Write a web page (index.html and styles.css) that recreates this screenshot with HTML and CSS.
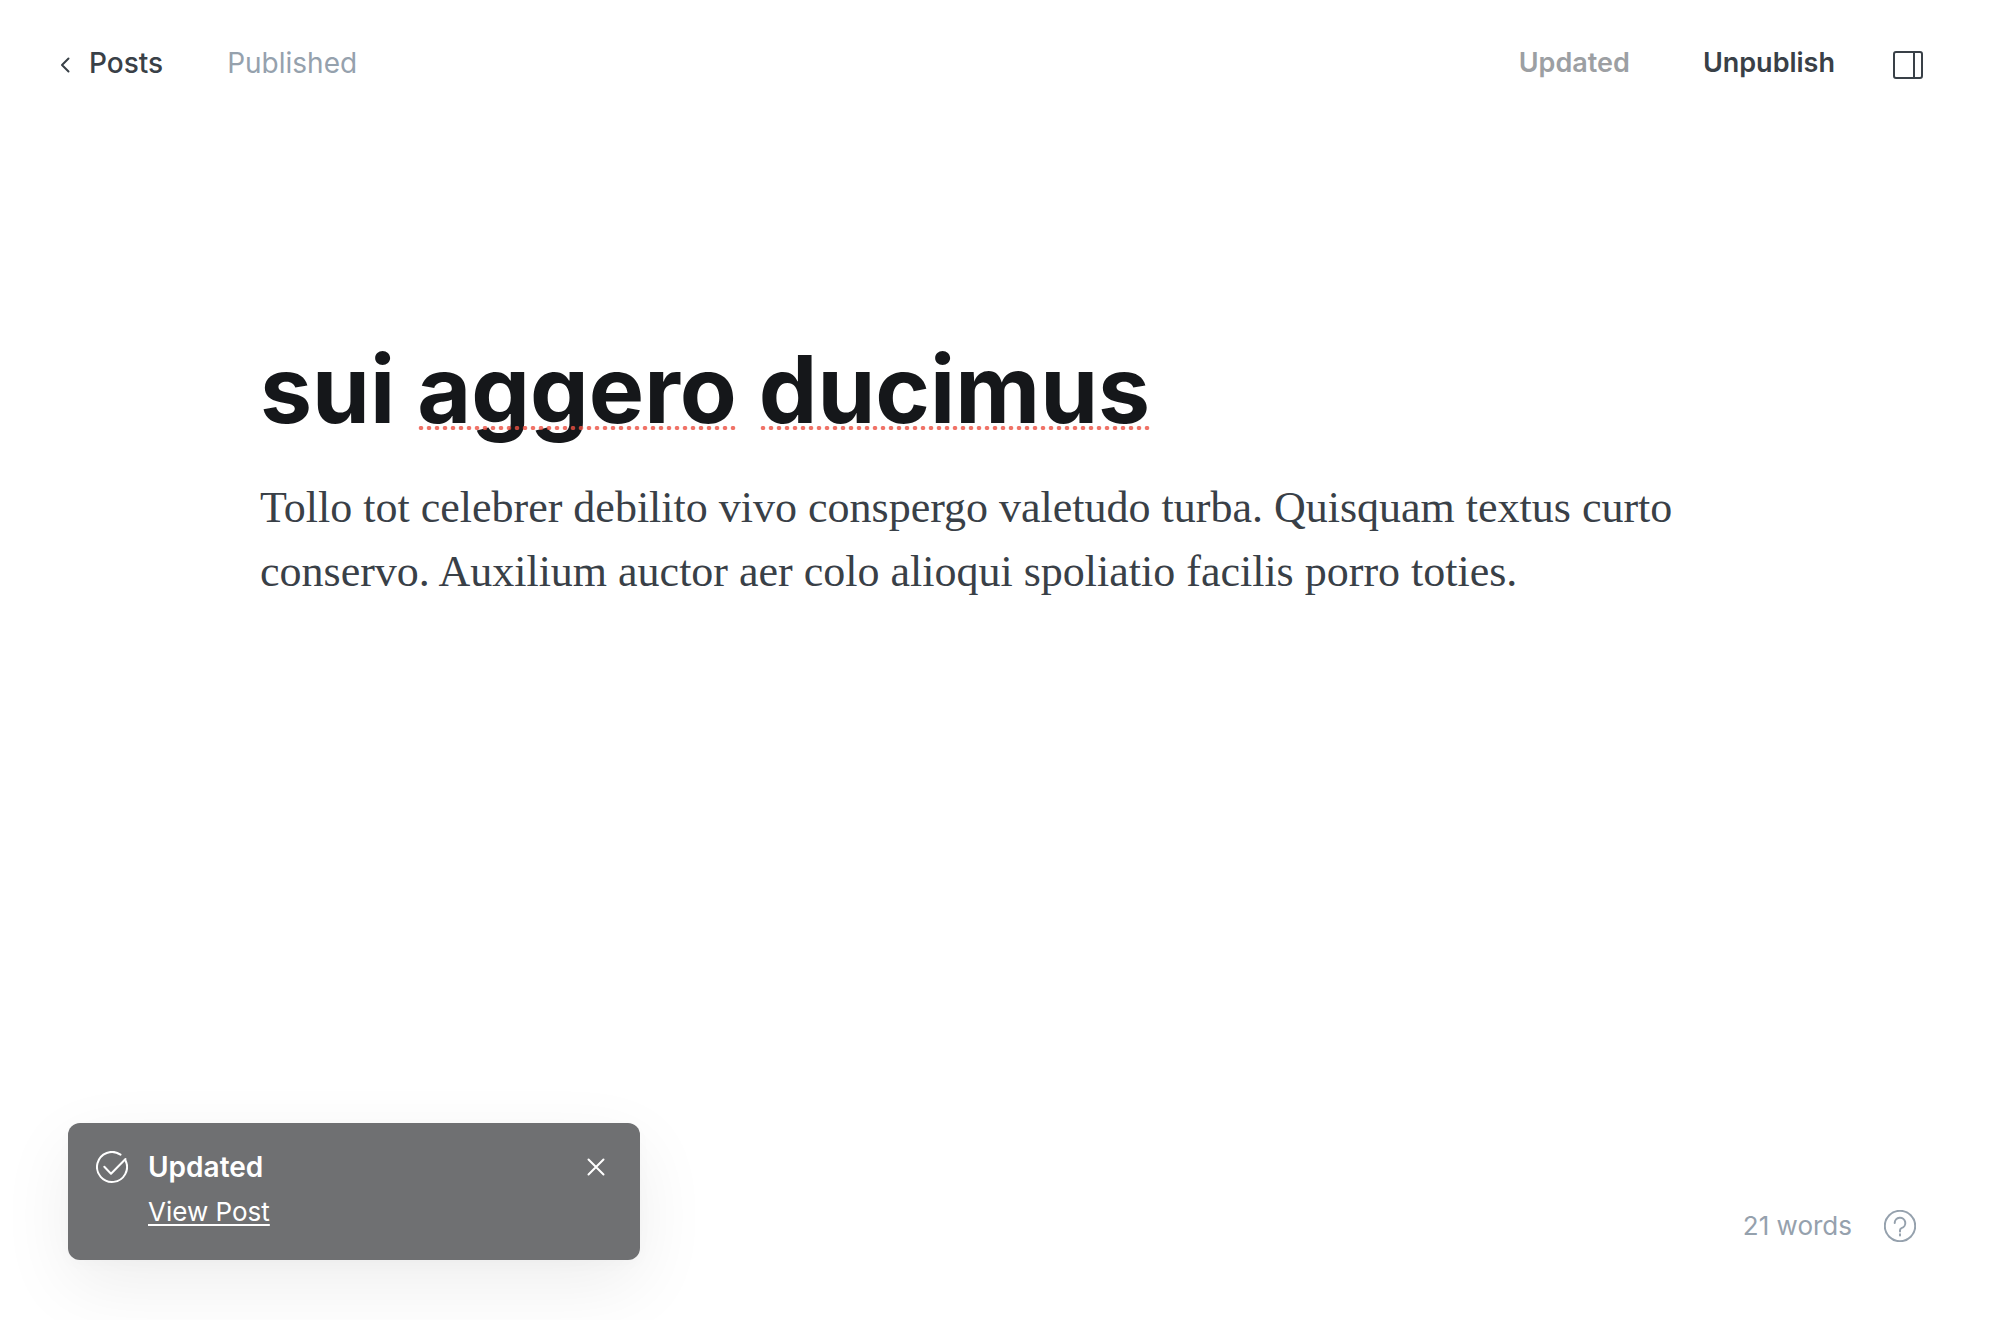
FILE: index.html
```html
<!DOCTYPE html>
<html lang="en">
<head>
<meta charset="utf-8">
<meta name="viewport" content="width=device-width, initial-scale=1">
<title>sui aggero ducimus</title>
<link rel="stylesheet" href="styles.css">
</head>
<body>
<div class="editor">
  <header class="editor-header">
    <div class="header-group header-left">
      <a class="back-link" href="#posts">
        <svg class="icon-back" viewBox="0 0 12 18" aria-hidden="true"><path d="M8.500 2.500L2 9L8.500 15.500"/></svg>
        <span>Posts</span>
      </a>
      <span class="post-status">Published</span>
    </div>
    <div class="header-group header-right">
      <button class="header-button is-done" type="button">Updated</button>
      <button class="header-button" type="button">Unpublish</button>
      <button class="icon-button" type="button" aria-label="Settings">
        <svg class="icon-sidebar" viewBox="0 0 32 32" aria-hidden="true"><rect x="2" y="3" width="28" height="26" rx="2"/><path d="M22 3V29"/></svg>
      </button>
    </div>
  </header>

  <main class="post">
    <h1 class="post-title">sui <span class="misspelled">aggero</span> <span class="misspelled">ducimus</span></h1>
    <p class="post-body">Tollo tot celebrer debilito vivo conspergo valetudo turba. Quisquam textus curto conservo. Auxilium auctor aer colo alioqui spoliatio facilis porro toties.</p>
  </main>

  <footer class="editor-footer">
    <div class="toast" role="status">
      <svg class="icon-check" viewBox="0 0 32 32" aria-hidden="true"><path d="M24.500 3.600A15 15 0 1 0 29.400 9.200"/><path d="M29.500 8L15 22.700L8.300 15.800"/></svg>
      <div class="toast-content">
        <strong class="toast-title">Updated</strong>
        <a class="toast-link" href="#view">View Post</a>
      </div>
      <button class="toast-close" type="button" aria-label="Close">
        <svg class="icon-close" viewBox="0 0 18 18" aria-hidden="true"><path d="M1.500 1.500L16.500 16.500M16.500 1.500L1.500 16.500"/></svg>
      </button>
    </div>
    <div class="footer-tools">
      <span class="word-count">21 words</span>
      <a class="help-link" href="#help" aria-label="Help">
        <svg class="icon-help" viewBox="0 0 32 32" aria-hidden="true"><circle cx="16" cy="16" r="15.200"/><path d="M10.700 13A5.300 5.300 0 1 1 17.500 18.100Q16 18.700 16 20.200V21.500"/><path d="M16 24.200V25.400"/></svg>
      </a>
    </div>
  </footer>
</div>
</body>
</html>
```
FILE: styles.css
```css
* {
  box-sizing: border-box;
}

body {
  margin: 0;
  background: #fff;
  color: #394047;
  font-family: Inter, "Liberation Sans", sans-serif;
  font-size: 28px;
  line-height: 36px;
}

button {
  padding: 0;
  border: 0;
  background: none;
  color: inherit;
  font: inherit;
  cursor: pointer;
}

a {
  color: inherit;
}

svg {
  display: block;
  fill: none;
  stroke: currentColor;
  stroke-width: 2;
  stroke-linecap: round;
  stroke-linejoin: round;
}

.editor {
  display: flex;
  flex-direction: column;
  min-height: 100vh;
}

.editor-header {
  display: flex;
  align-items: center;
  justify-content: space-between;
  padding: 45px 76px 47px 60px;
}

.header-group {
  display: flex;
  align-items: center;
}

.header-left {
  gap: 64px;
}

.header-right {
  gap: 73px;
}

.back-link {
  display: flex;
  align-items: center;
  gap: 17px;
  font-weight: 500;
  text-decoration: none;
}

.icon-back {
  width: 12px;
  height: 18px;
  margin-top: 4px;
}

.post-status {
  color: #95a1ad;
}

.header-button {
  font-size: 27px;
  font-weight: 600;
}

.header-button.is-done {
  color: #9c9fa3;
}

.icon-button {
  margin: 4px 0 0 -16px;
}

.icon-sidebar {
  width: 32px;
  height: 32px;
}

.post {
  flex: 1;
  width: 100%;
  max-width: 1480px;
  margin: 0 auto;
  padding-top: 201px;
}

.post-title {
  margin: 0;
  color: #15171a;
  font-size: 93px;
  font-weight: 700;
  line-height: 120px;
}

.misspelled {
  position: relative;
}

.misspelled::after {
  content: "";
  position: absolute;
  right: 0;
  bottom: 15px;
  left: 0;
  height: 4px;
  background: radial-gradient(circle, rgba(236, 80, 66, 0.8) 0 40%, transparent 60%) 0 0 / 8px 4px;
}

.post-body {
  margin: 27px 0 0;
  font-family: Georgia, "Liberation Serif", serif;
  font-size: 44px;
  line-height: 64px;
}

.editor-footer {
  display: flex;
  align-items: flex-end;
  justify-content: space-between;
  padding: 0 84px 60px 68px;
}

.toast {
  display: flex;
  align-items: flex-start;
  gap: 20px;
  width: 572px;
  padding: 26px 35px 30px 28px;
  border-radius: 12px;
  background: #6f7072;
  color: #fff;
  box-shadow: 0 4px 16px rgba(0, 0, 0, 0.02), 0 24px 72px rgba(0, 0, 0, 0.07);
}

.toast-content {
  display: flex;
  flex: 1;
  flex-direction: column;
  align-items: flex-start;
  gap: 9px;
}

.toast-title {
  font-weight: 600;
}

.toast-link {
  font-size: 26px;
  text-decoration-thickness: 2px;
  text-underline-offset: 3px;
}

.icon-check {
  width: 32px;
  height: 32px;
  margin-top: 2px;
}

.toast-close {
  margin-top: 9px;
}

.icon-close {
  width: 18px;
  height: 18px;
}

.footer-tools {
  display: flex;
  align-items: center;
  gap: 32px;
  padding-bottom: 16px;
  color: #95a1ad;
  font-size: 26px;
}

.icon-help {
  width: 32px;
  height: 32px;
}
```
